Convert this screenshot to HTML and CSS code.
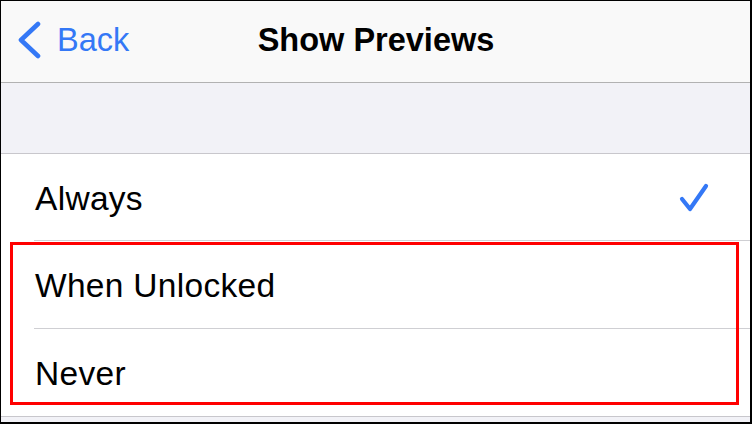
FILE: index.html
```html
<!DOCTYPE html>
<html>
<head>
<meta charset="utf-8">
<link rel="stylesheet" href="styles.css">
</head>
<body>
<div class="frame">
  <header class="nav">
    <div class="back">
      <svg class="chev" width="24" height="38" viewBox="0 0 24 38">
        <polyline points="20,3 3,19 20,35" fill="none" stroke="#3478f6" stroke-width="4.6" stroke-linecap="round" stroke-linejoin="round"/>
      </svg>
      <span class="back-label">Back</span>
    </div>
    <h1 class="title">Show Previews</h1>
  </header>
  <div class="band"></div>
  <ul class="list">
    <li class="row"><span class="label">Always</span>
      <svg class="check" width="32" height="32" viewBox="0 0 32 32">
        <polyline points="3,16 11,26 27,3" fill="none" stroke="#3478f6" stroke-width="4.2" stroke-linecap="round" stroke-linejoin="round"/>
      </svg>
    </li>
    <li class="row"><span class="label">When Unlocked</span></li>
    <li class="row last"><span class="label">Never</span></li>
  </ul>
  <div class="highlight"></div>
</div>
</body>
</html>
```
FILE: styles.css
```css
* { box-sizing: border-box; }
html, body { margin: 0; padding: 0; }
body {
  width: 752px;
  height: 424px;
  font-family: "Liberation Sans", Arial, sans-serif;
  background: #f2f2f7;
  overflow: hidden;
}
.frame {
  position: relative;
  width: 752px;
  height: 424px;
  border-style: solid;
  border-color: #000;
  border-width: 1px 2px 2px 1px;
  background: #f2f2f7;
  display: flex;
  flex-direction: column;
}
.nav {
  height: 82px;
  flex: none;
  background: #f9f9f9;
  border-bottom: 1px solid #b2b2b2;
  position: relative;
  display: flex;
  align-items: center;
  justify-content: center;
}
.back {
  position: absolute;
  left: 17px;
  top: 19px;
  display: flex;
  align-items: center;
  gap: 15px;
  color: #3478f6;
}
.chev { display: block; }
.back-label {
  font-size: 32.5px;
  line-height: 38px;
  padding-top: 1px;
}
.title {
  margin: 0;
  font-size: 32.5px;
  font-weight: bold;
  color: #000;
  line-height: 38px;
  padding-bottom: 4px;
  margin-left: 1px;
}
.band {
  height: 71px;
  flex: none;
  background: #f2f2f7;
  border-bottom: 1px solid #c8c7cc;
}
.list {
  list-style: none;
  margin: 0;
  padding: 0 0 0 33px;
  background: #fff;
  border-bottom: 1px solid #c8c7cc;
}
.row {
  height: 88px;
  display: flex;
  align-items: center;
  justify-content: space-between;
  padding-right: 39px;
  border-bottom: 1px solid #cfcfd3;
}
.row:first-child { height: 87px; }
.row.last { border-bottom: none; height: 87px; }
.label {
  font-size: 33.5px;
  letter-spacing: 0.3px;
  color: #000;
  line-height: 38px;
  padding-left: 1px;
  padding-top: 3px;
}
.check { display: block; margin-top: 4px; }
.highlight {
  position: absolute;
  left: 9px;
  top: 241px;
  width: 729px;
  height: 163px;
  border: 3px solid #ff0000;
}
```
